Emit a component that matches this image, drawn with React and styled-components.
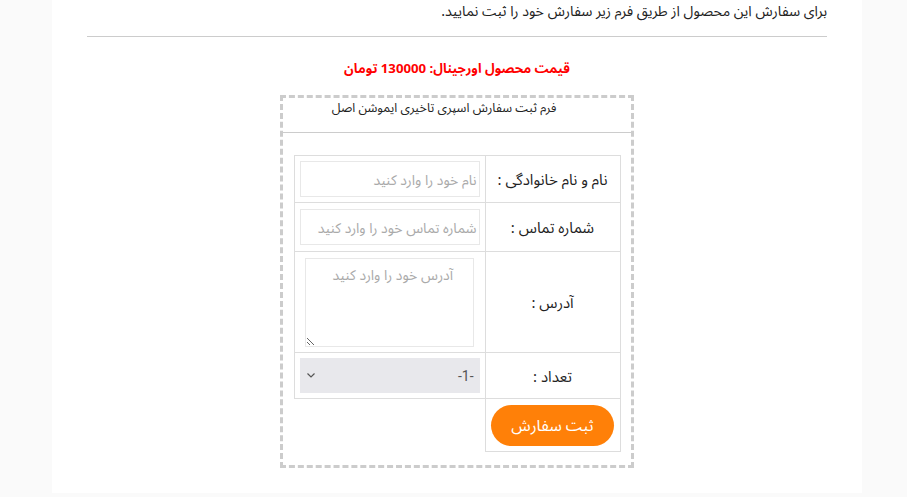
import React from "react";
import styled, { createGlobalStyle } from "styled-components";

const Global = createGlobalStyle`
  html, body { margin: 0; padding: 0; background: #fafafa; }
  body { font-family: "Noto Sans", "Noto Sans Arabic UI", "Noto Sans Arabic", "DejaVu Sans", sans-serif; color: #222; }
`;

const Panel = styled.div`
  direction: rtl;
  margin: 0 45px 0 52px;
  background: #fff;
  min-height: 493px;
  padding: 0 35px;
  box-sizing: border-box;
`;

const Intro = styled.p`
  margin: 0;
  font-size: 14.2px;
  line-height: 22px;
  text-align: right;
`;

const Rule = styled.hr`
  margin: 14px 0 0;
  border: 0;
  border-top: 1px solid #ccc;
`;

const Price = styled.p`
  margin: 22px 0 0;
  text-align: center;
  color: #f00;
  font-weight: bold;
  font-size: 13.2px;
  line-height: 18px;
`;

const FormBox = styled.div`
  width: 354px;
  box-sizing: border-box;
  margin: 18px auto 0;
  border: 3px dashed #ccc;
  padding-bottom: 13px;
`;

const FormTitle = styled.div`
  text-align: center;
  font-size: 12.5px;
  line-height: 18px;
  padding: 1px 26px 0 0;
  height: 35px;
  box-sizing: border-box;
  border-bottom: 1px solid #ccc;
  margin: 0 -1px;
`;

const Table = styled.table`
  margin: 22px auto 0;
  width: 327px;
  border-collapse: collapse;
  font-size: 15px;
  line-height: 18px;
`;

const Label = styled.td`
  width: 135px;
  border: 1px solid #ddd;
  text-align: center;
  vertical-align: middle;
  padding: 0;
  height: ${(p) => p.$h}px;
  box-sizing: border-box;
`;

const Field = styled.td`
  border: 1px solid #ddd;
  text-align: center;
  vertical-align: middle;
  padding: 0;
`;

const Input = styled.input`
  width: 180px;
  height: 36px;
  box-sizing: border-box;
  border: 1px solid #e8e8e8;
  font-family: inherit;
  font-size: 14px;
  direction: rtl;
  padding: 0 2px;
  display: block;
  margin: 0 auto;
  &::placeholder { color: #aaa; }
`;

const Area = styled.textarea`
  width: 169px;
  height: 89px;
  box-sizing: border-box;
  border: 1px solid #e8e8e8;
  font-family: inherit;
  font-size: 14px;
  line-height: 20px;
  direction: rtl;
  padding: 6px 20px;
  display: block;
  margin: 0 auto;
  resize: both;
  &::placeholder { color: #aaa; }
`;

const SelectWrap = styled.div`
  position: relative;
  width: 180px;
  height: 35px;
  margin: 0 auto;
`;

const Select = styled.select`
  appearance: none;
  display: block;
  width: 100%;
  height: 100%;
  border: 0;
  background: #e8e8ec;
  font-family: "Roboto", sans-serif;
  font-size: 14px;
  color: #555;
  direction: rtl;
  padding: 0 6px;
`;

const Chevron = styled.svg`
  position: absolute;
  left: 6px;
  top: 14px;
  pointer-events: none;
`;

const ButtonCell = styled.td`
  border: 1px solid #ddd;
  text-align: center;
  vertical-align: middle;
  padding: 0;
  height: 52px;
`;

const Submit = styled.button`
  display: block;
  margin: 0 auto;
  width: 123px;
  height: 41px;
  border: 0;
  border-radius: 21px;
  background: #ff8008;
  color: #fff;
  font-family: inherit;
  font-size: 16px;
  cursor: pointer;
`;

export default function App() {
  return (
    <>
      <Global />
      <Panel>
        <Intro>برای سفارش این محصول از طریق فرم زیر سفارش خود را ثبت نمایید.</Intro>
        <Rule />
        <Price>قیمت محصول اورجینال: 130000 تومان</Price>
        <FormBox>
          <FormTitle>فرم ثبت سفارش اسپری تاخیری ایموشن اصل</FormTitle>
          <Table>
            <tbody>
              <tr>
                <Label $h={47}>نام و نام خانوادگی :</Label>
                <Field><Input placeholder="نام خود را وارد کنید" /></Field>
              </tr>
              <tr>
                <Label $h={49}>شماره تماس :</Label>
                <Field><Input placeholder="شماره تماس خود را وارد کنید" /></Field>
              </tr>
              <tr>
                <Label $h={101}>آدرس :</Label>
                <Field><Area placeholder="آدرس خود را وارد کنید" /></Field>
              </tr>
              <tr>
                <Label $h={46}>تعداد :</Label>
                <Field>
                  <SelectWrap>
                    <Select defaultValue="1">
                      <option value="1">-1-</option>
                      <option value="2">-2-</option>
                      <option value="3">-3-</option>
                    </Select>
                    <Chevron width="10" height="7" viewBox="0 0 10 7">
                      <path d="M1.5 1.5 L5 5 L8.5 1.5" fill="none" stroke="#555" strokeWidth="1.2" />
                    </Chevron>
                  </SelectWrap>
                </Field>
              </tr>
              <tr>
                <ButtonCell><Submit type="button">ثبت سفارش</Submit></ButtonCell>
              </tr>
            </tbody>
          </Table>
        </FormBox>
      </Panel>
    </>
  );
}
